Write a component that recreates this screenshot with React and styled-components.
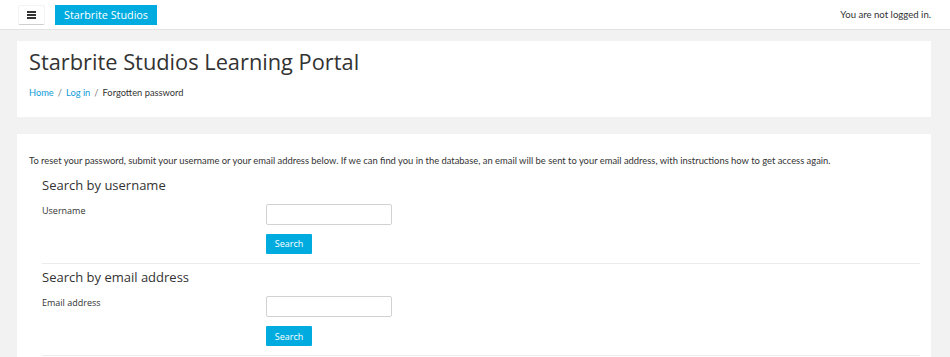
import React from 'react'
import styled, { createGlobalStyle } from 'styled-components';

const GlobalStyle = createGlobalStyle`
  html, body {
    margin:0;
    padding:0;
    background:#f2f2f2;
  }
  body {
    font-family:Lato, "Open Sans", sans-serif;
    color:#333;
  }
  * { box-sizing:border-box; }
`

const accent = '#00acdf';

const Navbar = styled.header`
  height:30px;
  background:#fff;
  border-bottom:1px solid #e3e3e3;
  display:flex;
  align-items:center;
  padding:0 19px 0 18px;
`
const MenuButton = styled.button`
  width:27px;
  height:20px;
  padding:0;
  margin:0 10px 0 0;
  background:#fff;
  border:1px solid #f3f3f3;
  border-bottom-color:#cfcfcf;
  border-radius:2px;
  display:flex;
  align-items:center;
  justify-content:center;
`
const Brand = styled.a`
  height:20px;
  padding:0 9px;
  background:${accent};
  color:#fff;
  font-family:"Open Sans", sans-serif;
  font-size:10.8px;
  line-height:20px;
  text-decoration:none;
  white-space:nowrap;
`
const LoginInfo = styled.span`
  margin-left:auto;
  font-size:9.6px;
  color:#333;
`

const Page = styled.main`
  padding:11px 19px 0 17px;
  display:flex;
  flex-direction:column;
  gap:17px;
`
const Card = styled.section`
  background:#fff;
  padding:${props => props.$pad || '8px 12px 17px'};
  min-height:${props => props.$minHeight || 'auto'};
`
const Title = styled.h1`
  margin:0;
  font-family:"Open Sans", sans-serif;
  font-weight:400;
  font-size:21.8px;
  line-height:1.2;
  color:#333;
`
const Crumbs = styled.nav`
  margin-top:10px;
  font-size:9.3px;
  line-height:15px;
  display:flex;
  gap:4px;
  color:#333;
`
const Crumb = styled.a`
  color:${props => props.$current ? '#333' : '#0f9cd6'};
  text-decoration:none;
`
const Sep = styled.span`
  color:#777;
`
const Intro = styled.p`
  margin:0 0 10px;
  font-size:9.4px;
  line-height:15px;
  white-space:nowrap;
`
const Fieldset = styled.fieldset`
  margin:0 0 6.5px 13px;
  padding:0 0 9px;
  border:0;
  border-bottom:1px solid #ececec;
`
const Legend = styled.h3`
  margin:0 0 10.5px;
  font-family:"Open Sans", sans-serif;
  font-weight:400;
  font-size:13px;
  line-height:1.2;
  color:#333;
`
const Row = styled.div`
  display:grid;
  grid-template-columns:224px 1fr;
  align-items:start;
  margin-bottom:9px;
  &:last-child{ margin-bottom:0; }
`
const Label = styled.label`
  font-family:"Open Sans", sans-serif;
  font-size:9px;
  line-height:1.5;
  color:#333;
`
const Input = styled.input`
  width:126px;
  height:21px;
  border:1px solid #d2d2d2;
  border-radius:2px;
  padding:0 5px;
  background:#fff;
`
const SearchButton = styled.button`
  grid-column:2;
  justify-self:start;
  width:46px;
  height:20px;
  padding:0;
  border:0;
  border-radius:1px;
  background:${accent};
  color:#fff;
  font-family:"Open Sans", sans-serif;
  font-size:9px;
`

const Bars = () => (
  <svg width="9" height="8" viewBox="0 0 9 8">
    <rect x="0" y="0" width="9" height="2" fill="#333" />
    <rect x="0" y="3" width="9" height="2" fill="#333" />
    <rect x="0" y="6" width="9" height="2" fill="#333" />
  </svg>
)

const SearchSection = ({ title, label }) => (
  <Fieldset>
    <Legend>{title}</Legend>
    <Row>
      <Label>{label}</Label>
      <Input type="text" />
    </Row>
    <Row>
      <SearchButton>Search</SearchButton>
    </Row>
  </Fieldset>
)

const App = () => {
  return (
    <>
      <GlobalStyle />
      <Navbar>
        <MenuButton><Bars /></MenuButton>
        <Brand href="#">Starbrite Studios</Brand>
        <LoginInfo>You are not logged in.</LoginInfo>
      </Navbar>
      <Page>
        <Card>
          <Title>Starbrite Studios Learning Portal</Title>
          <Crumbs>
            <Crumb href="#">Home</Crumb>
            <Sep>/</Sep>
            <Crumb href="#">Log in</Crumb>
            <Sep>/</Sep>
            <Crumb $current>Forgotten password</Crumb>
          </Crumbs>
        </Card>
        <Card $pad="18.5px 11px 0 12px" $minHeight="240px">
          <Intro>
            To reset your password, submit your username or your email address below. If we can find you in the database, an email will be sent to your email address, with instructions how to get access again.
          </Intro>
          <SearchSection title="Search by username" label="Username" />
          <SearchSection title="Search by email address" label="Email address" />
        </Card>
      </Page>
    </>
  )
}

export default App
